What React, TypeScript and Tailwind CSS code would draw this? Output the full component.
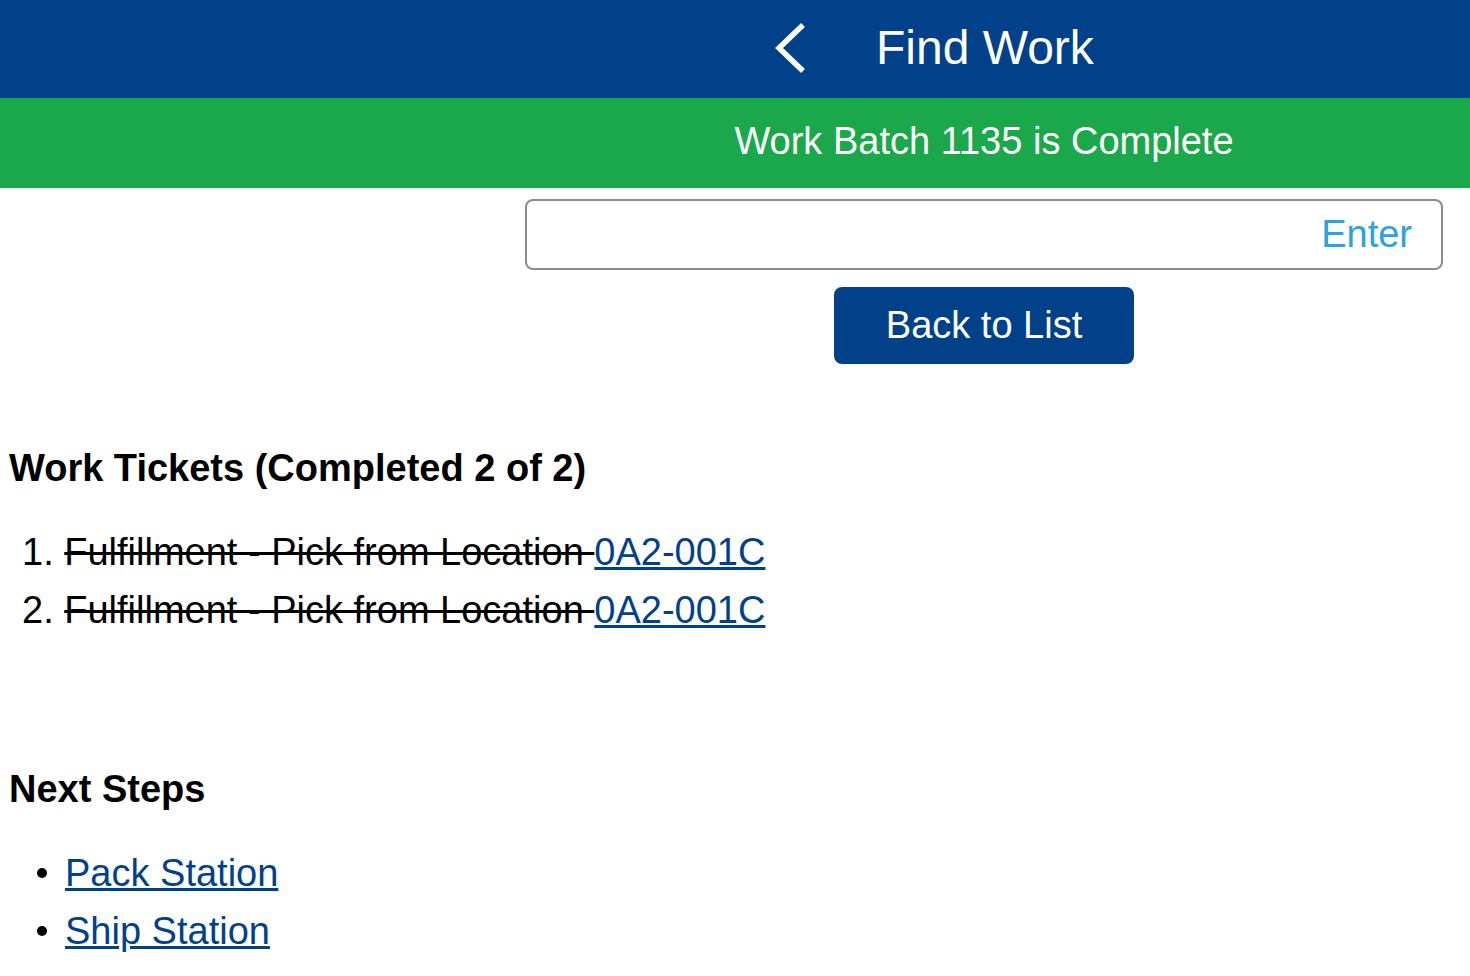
export default function App() {
  const tickets = [
    { n: 1, loc: "0A2-001C" },
    { n: 2, loc: "0A2-001C" },
  ];
  const steps = ["Pack Station", "Ship Station"];

  return (
    <div className="min-h-screen bg-white text-black font-['Liberation_Sans',Arial,sans-serif]">
      <header className="h-[98px] bg-[#00418a] text-white flex items-center">
        <div className="ml-[525px] w-[918px] flex items-center">
          <div className="w-[250px]" />
          <svg width="32" height="52" viewBox="0 0 32 52" className="shrink-0">
            <path d="M28 2 L4 25 L28 48" fill="none" stroke="white" strokeWidth="5.5" />
          </svg>
          <h1 className="ml-[69px] text-[48px] leading-none -mt-[2px]">Find Work</h1>
        </div>
      </header>

      <div className="h-[90px] bg-[#1ba84a] text-white flex items-center">
        <div className="ml-[525px] w-[918px] text-center text-[38px] -mt-[4px]">Work Batch 1135 is Complete</div>
      </div>

      <div className="ml-[525px] w-[918px] flex flex-col items-center">
        <div className="mt-[11px] w-full h-[71px] border-2 border-[#8c8c8c] rounded-[8px] flex items-center justify-end pr-[29px]">
          <span className="text-[38px] text-[#2aa3e0]">Enter</span>
        </div>
        <button className="mt-[17px] w-[300px] h-[77px] bg-[#00418a] text-white rounded-[8px] text-[38px]">
          Back to List
        </button>
      </div>

      <section className="mt-[82px] pl-[9px]">
        <h2 className="text-[38px] font-bold leading-[44px]">Work Tickets (Completed 2 of 2)</h2>
        <ol className="mt-[33px]">
          {tickets.map((t) => (
            <li key={t.n} className="text-[38px] leading-[58px] pl-[13px]">
              {t.n}. <span className="line-through">Fulfillment - Pick from Location </span>
              <a href="#" className="text-[#00418a] underline">{t.loc}</a>
            </li>
          ))}
        </ol>
      </section>

      <section className="mt-[128px] pl-[9px]">
        <h2 className="text-[38px] font-bold leading-[44px]">Next Steps</h2>
        <ul className="mt-[33px]">
          {steps.map((s) => (
            <li key={s} className="text-[38px] leading-[58px] flex items-center">
              <span className="ml-[28px] w-[10px] h-[10px] rounded-full bg-black" />
              <a href="#" className="ml-[18px] text-[#00418a] underline">{s}</a>
            </li>
          ))}
        </ul>
      </section>
    </div>
  );
}
